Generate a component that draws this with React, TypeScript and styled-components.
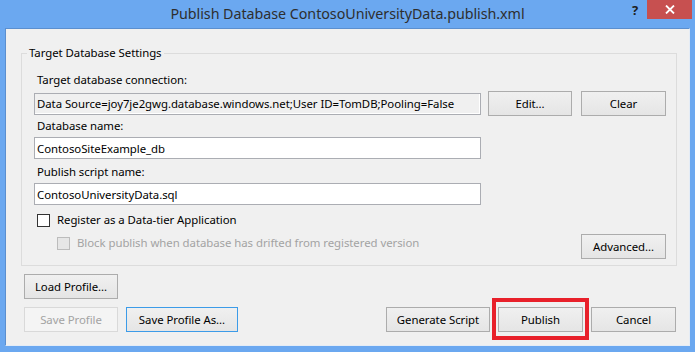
import React from 'react';
import styled, { createGlobalStyle } from 'styled-components';

const GlobalStyle = createGlobalStyle`
  html, body {
    margin: 0;
    padding: 0;
    background: #6ba8f0;
  }

  body {
    font-family: 'Segoe UI', 'Noto Sans', sans-serif;
    font-size: 11.4px;
    letter-spacing: -0.05px;
    color: #000;
  }
`;

const Window = styled.div`
  width: 695px;
  height: 352px;
  box-sizing: border-box;
  background: #6ba8f0;
  display: flex;
  flex-direction: column;
`;

const TitleBar = styled.div`
  height: 28px;
  display: grid;
  grid-template-columns: 1fr auto 1fr;
  align-items: start;
`;

const Title = styled.div`
  grid-column: 2;
  padding-top: 4px;
  font-size: 14.3px;
  line-height: 20px;
  color: #2e2e2e;
  white-space: nowrap;
`;

const Controls = styled.div`
  grid-column: 3;
  display: flex;
  justify-content: flex-end;
  padding-right: 3px;
`;

const HelpButton = styled.div`
  width: 24px;
  height: 19px;
  display: flex;
  align-items: center;
  justify-content: center;
  font-size: 13px;
  font-weight: bold;
  color: #1e1e1e;
`;

const CloseButton = styled.div`
  width: 45px;
  height: 19px;
  background: #c75050;
  display: flex;
  align-items: center;
  justify-content: center;
`;

const Client = styled.div`
  flex: 1;
  margin: 0 5px 6px 5px;
  background: #f0f0f0;
  border: 1px solid #5b8fcf;
  border-color: #5b8fcf #e4ecf6 #e4ecf6 #5b8fcf;
  padding: 16px 13px 0 18px;
  display: flex;
  flex-direction: column;
`;

const GroupBox = styled.fieldset`
  margin: 0 0 0 -3px;
  padding: 11px 10px 6px 12px;
  border: 1px solid #dcdcdc;
  display: flex;
  flex-direction: column;
`;

const Legend = styled.legend`
  margin-left: -7px;
  padding: 0 2px;
  line-height: 16px;
`;

const Label = styled.div<{ $gap?: number }>`
  line-height: 16px;
  padding-left: 3px;
  margin-top: ${(p) => p.$gap ?? 0}px;
  margin-bottom: 3px;
`;

const FieldRow = styled.div`
  display: flex;
  align-items: center;
`;

const TextBox = styled.input<{ $readOnlyLook?: boolean }>`
  width: 447px;
  height: 22px;
  box-sizing: border-box;
  margin: 0;
  padding: 0 2px;
  font: inherit;
  letter-spacing: inherit;
  color: #000;
  border: 1px solid #abadb3;
  background: ${(p) => (p.$readOnlyLook ? '#f0f0f0' : '#fff')};
  box-shadow: ${(p) => (p.$readOnlyLook ? 'inset -1px -1px 0 #fff' : 'none')};
  outline: none;
`;

const Button = styled.button<{ $width: number; $variant?: 'focused' | 'disabled' }>`
  width: ${(p) => p.$width}px;
  height: 25px;
  box-sizing: border-box;
  margin: 0;
  padding: 0;
  font: inherit;
  letter-spacing: inherit;
  color: ${(p) => (p.$variant === 'disabled' ? '#a3a3a3' : '#000')};
  border: 1px solid
    ${(p) => (p.$variant === 'focused' ? '#3c9be8' : p.$variant === 'disabled' ? '#d9d9d9' : '#acacac')};
  background: ${(p) =>
    p.$variant === 'disabled' ? '#f4f4f4' : 'linear-gradient(#f0f0f0, #e5e5e5)'};
  cursor: default;
`;

const ConnectionRow = styled(FieldRow)`
  gap: 7px;

  & > button + button {
    margin-left: 2px;
  }
`;

const OptionsRow = styled.div`
  display: flex;
  align-items: flex-end;
  justify-content: space-between;
  margin-top: 7px;
`;

const CheckList = styled.div`
  display: flex;
  flex-direction: column;
  gap: 7px;
  padding-bottom: 8px;
`;

const CheckRow = styled.label<{ $indent?: boolean; $disabled?: boolean }>`
  display: flex;
  align-items: center;
  gap: 7px;
  padding-left: ${(p) => (p.$indent ? 23 : 3)}px;
  line-height: 16px;
  color: ${(p) => (p.$disabled ? '#a3a3a3' : '#000')};
`;

const Box = styled.span<{ $disabled?: boolean }>`
  width: 13px;
  height: 13px;
  box-sizing: border-box;
  border: 1px solid ${(p) => (p.$disabled ? '#bcbcbc' : '#333')};
  background: ${(p) => (p.$disabled ? '#e6e6e6' : '#fff')};
`;

const ButtonBar = styled.div<{ $top: number }>`
  display: flex;
  gap: 8px;
  margin-top: ${(p) => p.$top}px;
`;

const Spacer = styled.div`
  flex: 1;
`;

const Highlighted = styled.div`
  position: relative;
  display: flex;
`;

const RedFrame = styled.div`
  position: absolute;
  left: -6px;
  right: -6px;
  top: -9px;
  bottom: -8px;
  border: 4px solid #e8202a;
  pointer-events: none;
`;

export default function App() {
  return (
    <Window>
      <GlobalStyle />
      <TitleBar>
        <Title>Publish Database ContosoUniversityData.publish.xml</Title>
        <Controls>
          <HelpButton>?</HelpButton>
          <CloseButton>
            <svg width="10" height="9" viewBox="0 0 10 9">
              <path d="M1 0.5 L9 8.5 M9 0.5 L1 8.5" stroke="#fff" strokeWidth="1.8" />
            </svg>
          </CloseButton>
        </Controls>
      </TitleBar>
      <Client>
        <GroupBox>
          <Legend>Target Database Settings</Legend>
          <Label>Target database connection:</Label>
          <ConnectionRow>
            <TextBox
              $readOnlyLook
              readOnly
              value="Data Source=joy7je2gwg.database.windows.net;User ID=TomDB;Pooling=False"
            />
            <Button $width={84}>Edit...</Button>
            <Button $width={85}>Clear</Button>
          </ConnectionRow>
          <Label $gap={2}>Database name:</Label>
          <FieldRow>
            <TextBox readOnly value="ContosoSiteExample_db" />
          </FieldRow>
          <Label $gap={5}>Publish script name:</Label>
          <FieldRow>
            <TextBox readOnly value="ContosoUniversityData.sql" />
          </FieldRow>
          <OptionsRow>
            <CheckList>
              <CheckRow>
                <Box />
                Register as a Data-tier Application
              </CheckRow>
              <CheckRow $indent $disabled>
                <Box $disabled />
                Block publish when database has drifted from registered version
              </CheckRow>
            </CheckList>
            <Button $width={85}>Advanced...</Button>
          </OptionsRow>
        </GroupBox>
        <ButtonBar $top={8}>
          <Button $width={94}>Load Profile...</Button>
        </ButtonBar>
        <ButtonBar $top={8}>
          <Button $width={94} $variant="disabled">Save Profile</Button>
          <Button $width={112} $variant="focused">Save Profile As...</Button>
          <Spacer />
          <Button $width={104}>Generate Script</Button>
          <Highlighted>
            <Button $width={85}>Publish</Button>
            <RedFrame />
          </Highlighted>
          <Button $width={85}>Cancel</Button>
        </ButtonBar>
      </Client>
    </Window>
  );
}
